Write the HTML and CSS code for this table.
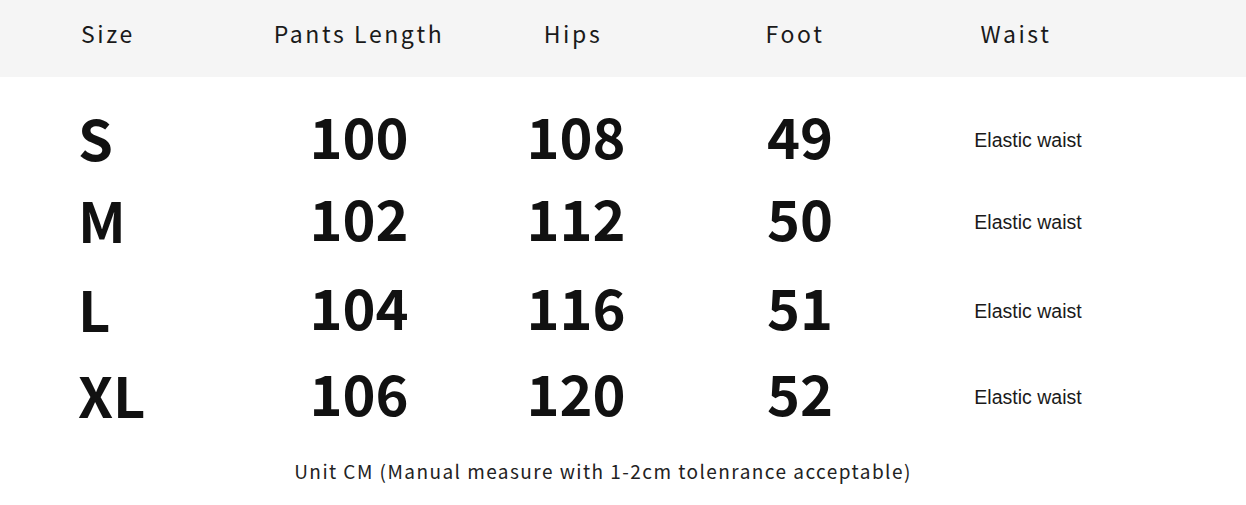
FILE: index.html
```html
<!DOCTYPE html>
<html lang="en">
<head>
<meta charset="utf-8">
<title>Size chart</title>
<link rel="stylesheet" href="styles.css">
</head>
<body>
<div class="chart">
  <div class="head">
    <div class="h">Size</div>
    <div class="h">Pants Length</div>
    <div class="h">Hips</div>
    <div class="h">Foot</div>
    <div class="h">Waist</div>
  </div>
  <div class="body">
    <div class="sz">S</div><div class="num">100</div><div class="num">108</div><div class="num">49</div><div class="txt">Elastic waist</div>
    <div class="sz">M</div><div class="num">102</div><div class="num">112</div><div class="num">50</div><div class="txt">Elastic waist</div>
    <div class="sz">L</div><div class="num">104</div><div class="num">116</div><div class="num">51</div><div class="txt">Elastic waist</div>
    <div class="sz">XL</div><div class="num">106</div><div class="num">120</div><div class="num">52</div><div class="txt">Elastic waist</div>
  </div>
  <div class="foot">
    <div class="note">Unit CM (Manual measure with 1-2cm tolenrance acceptable)</div>
  </div>
</div>
</body>
</html>
```

FILE: styles.css
```css
html, body {
  margin: 0;
  padding: 0;
  background: #ffffff;
}
.chart {
  width: 1246px;
  height: 505px;
  overflow: hidden;
  color: #111;
}
.head {
  display: grid;
  grid-template-columns: 216px 286px 142px 302px 140px;
  height: 77px;
  background: #f5f5f5;
  align-items: center;
}
.h {
  font-family: "Noto Sans CJK SC", "Noto Sans", sans-serif;
  font-size: 23px;
  letter-spacing: 2.6px;
  text-align: center;
  color: #1a1a1a;
  padding-bottom: 12px;
}
.body {
  display: grid;
  grid-template-columns: 216px 286px 148px 300px 156px;
  grid-template-rows: 82px 82px 96px 76px;
  align-items: center;
  margin-top: 17px;
}
.sz {
  font-family: "Noto Sans CJK SC", sans-serif;
  font-weight: 700;
  font-size: 56px;
  padding-left: 78px;
  padding-top: 3px;
  line-height: 1;
}
.num {
  font-family: "Noto Sans CJK SC", sans-serif;
  font-weight: 700;
  font-size: 56px;
  text-align: center;
  line-height: 1;
}
.txt {
  font-family: "Liberation Sans", Arial, sans-serif;
  font-size: 19.5px;
  text-align: center;
  color: #1a1a1a;
  padding-top: 11px;
}
.foot {
  display: flex;
  justify-content: center;
  padding-top: 23px;
}
.note {
  font-family: "Noto Sans CJK SC", "Noto Sans", sans-serif;
  font-size: 19px;
  letter-spacing: 1.45px;
  color: #222;
  padding: 4px 40px;
  margin-left: -40px;
}
```
